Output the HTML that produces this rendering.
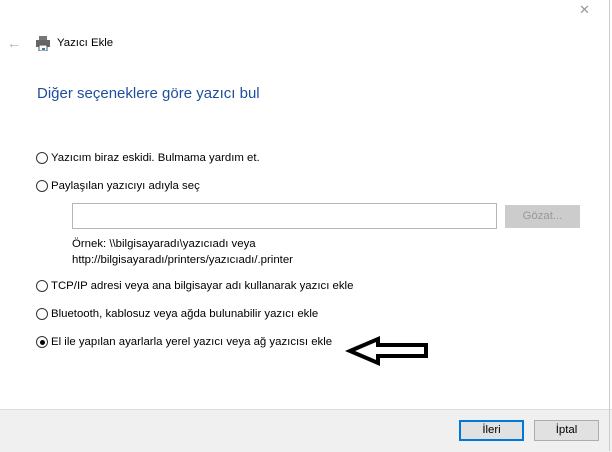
<!DOCTYPE html>
<html><head><meta charset="utf-8"><style>
body{margin:0;width:612px;height:451px;background:#fff;font-family:"Segoe UI","Liberation Sans",sans-serif;font-size:11.4px;color:#000;position:relative;overflow:hidden}
.a{position:absolute;white-space:nowrap}
.r{position:absolute;width:12px;height:12px;border:1px solid #333;border-radius:50%;box-sizing:border-box}
.r.on::after{content:"";position:absolute;left:2.5px;top:2.5px;width:5px;height:5px;border-radius:50%;background:#000}
.btn{position:absolute;height:21px;box-sizing:border-box;background:#e1e1e1;border:1px solid #adadad;text-align:center;line-height:19px}
</style></head><body>
<div class="a" style="left:579px;top:2px;color:#999;font-size:13px">✕</div>
<div class="a" style="left:7px;top:35px;color:#aaa;font-size:14px">←</div>
<svg class="a" style="left:35px;top:36px" width="16" height="15" viewBox="0 0 16 15"><rect x="4" y="0" width="8" height="4" fill="#777"/><rect x="1" y="4" width="14" height="7" fill="#666"/><rect x="4" y="9" width="8" height="6" fill="#fff" stroke="#555"/><rect x="7" y="12" width="3" height="2" fill="#28a"/></svg>
<div class="a" style="left:57px;top:37px">Yazıcı Ekle</div>
<div class="a" style="left:37px;top:85px;font-size:15px;color:#1f4e9c">Diğer seçeneklere göre yazıcı bul</div>
<div class="r" style="left:36px;top:152px"></div><div class="a" style="left:51px;top:152px">Yazıcım biraz eskidi. Bulmama yardım et.</div>
<div class="r" style="left:36px;top:180px"></div><div class="a" style="left:51px;top:180px">Paylaşılan yazıcıyı adıyla seç</div>
<div class="a" style="left:72px;top:203px;width:425px;height:26px;border:1px solid #b5b5b5;box-sizing:border-box"></div>
<div class="btn" style="left:505px;top:205px;width:75px;height:23px;line-height:21px;color:#999;background:#ccc;border-color:#ccc">Gözat...</div>
<div class="a" style="left:72px;top:236px;line-height:16px">Örnek: \\bilgisayaradı\yazıcıadı veya<br>http://bilgisayaradı/printers/yazıcıadı/.printer</div>
<div class="r" style="left:36px;top:280px"></div><div class="a" style="left:51px;top:280px">TCP/IP adresi veya ana bilgisayar adı kullanarak yazıcı ekle</div>
<div class="r" style="left:36px;top:308px"></div><div class="a" style="left:51px;top:308px">Bluetooth, kablosuz veya ağda bulunabilir yazıcı ekle</div>
<div class="r on" style="left:36px;top:336px"></div><div class="a" style="left:51px;top:336px">El ile yapılan ayarlarla yerel yazıcı veya ağ yazıcısı ekle</div>
<svg class="a" style="left:345px;top:334px" width="86" height="34"><path d="M5 17 L33 5 L33 11 L81 11 L81 22 L33 22 L33 29 Z" fill="none" stroke="#000" stroke-width="4" stroke-linejoin="miter"/></svg>
<div class="a" style="left:0;top:409px;width:612px;height:42px;background:#f0f0f0;border-top:1px solid #dcdcdc"></div>
<div class="a" style="left:609px;top:0;width:1px;height:451px;background:#ccc"></div>
<div class="btn" style="left:459px;top:420px;width:65px;border:2px solid #0078d7;line-height:17px">İleri</div>
<div class="btn" style="left:534px;top:420px;width:65px">İptal</div>
</body></html>
